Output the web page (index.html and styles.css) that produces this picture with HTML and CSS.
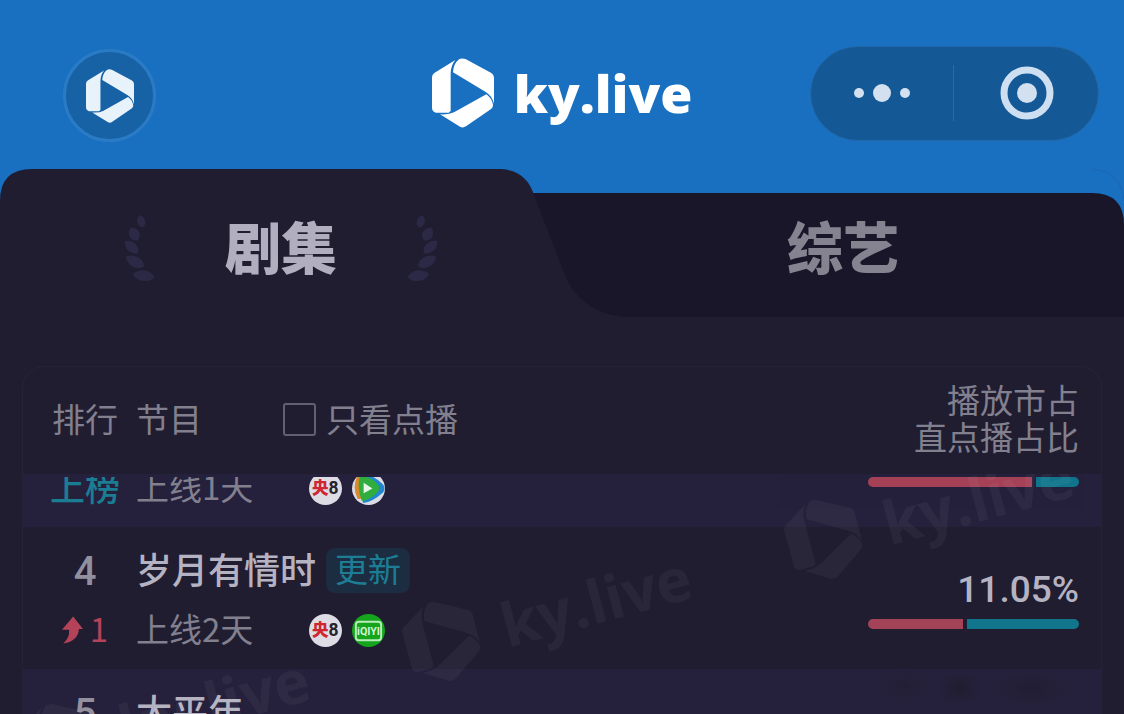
FILE: index.html
```html
<!DOCTYPE html>
<html lang="zh-CN">
<head>
<meta charset="utf-8">
<meta name="viewport" content="width=device-width, initial-scale=1">
<title>ky.live</title>
<link rel="stylesheet" href="styles.css">
</head>
<body>
<svg class="defs" aria-hidden="true">
  <symbol id="logo" viewBox="0 0 186 208">
    <path d="M0 56Q0 48 8 43L70 5Q56 22 56 46V158L50 163H12Q0 160 0 148Z"/>
    <path d="M63 42Q64 16 82 2Q92-2 102 3L178 44Q186 49 186 58V136Q180 112 160 100Z"/>
    <path d="M163 108Q180 120 183 140Q184 148 174 154L102 204Q93 210 84 205L24 168Q50 170 66 162Z"/>
  </symbol>
  <symbol id="laurel" viewBox="0 0 92 198">
    <g transform="translate(51 19) rotate(-15) scale(1 .65)"><path d="M0-30Q12-16 12 2Q12 20 0 30Q-12 20-12 2Q-12-16 0-30Z"/></g>
    <g transform="translate(30 57) rotate(-30) scale(1.3 .75)"><path d="M0-30Q12-16 12 2Q12 20 0 30Q-12 20-12 2Q-12-16 0-30Z"/></g>
    <g transform="translate(22 96) rotate(-48) scale(1.25 .9)"><path d="M0-30Q12-16 12 2Q12 20 0 30Q-12 20-12 2Q-12-16 0-30Z"/></g>
    <g transform="translate(32 140) rotate(-62) scale(1.35 1.05)"><path d="M0-30Q12-16 12 2Q12 20 0 30Q-12 20-12 2Q-12-16 0-30Z"/></g>
    <g transform="translate(58 182) rotate(-82) scale(1.35 1.1)"><path d="M0-30Q12-16 12 2Q12 20 0 30Q-12 20-12 2Q-12-16 0-30Z"/></g>
  </symbol>
</svg>

<header class="topbar">
  <button class="home" type="button" aria-label="首页"><svg><use href="#logo"/></svg></button>
  <div class="brand"><svg class="brand-mark"><use href="#logo"/></svg><span>ky.live</span></div>
  <div class="capsule">
    <button type="button" aria-label="更多">
      <svg width="58" height="20" viewBox="0 0 58 20"><circle cx="6" cy="10" r="5"/><circle cx="29" cy="10" r="9"/><circle cx="52" cy="10" r="5"/></svg>
    </button>
    <button type="button" aria-label="关闭">
      <svg width="54" height="54" viewBox="0 0 54 54"><circle class="ring" cx="27" cy="27" r="23"/><circle cx="27" cy="27" r="10"/></svg>
    </button>
  </div>
</header>

<main>
  <nav class="tabs">
    <svg class="tabs-shape" viewBox="0 0 1124 148" preserveAspectRatio="none" aria-hidden="true">
      <path class="shape-edge" d="M1092 0Q1120 2 1124 30"/>
      <path class="shape-back" d="M520 24H1092Q1124 24 1124 56V148H520Z"/>
      <path class="shape-front" d="M0 32Q0 0 32 0H498C518 0 529 10 534 26L564 104C574 130 596 146 626 148H0Z"/>
    </svg>
    <button class="tab tab-active" type="button">
      <svg class="laurel"><use href="#laurel"/></svg>
      <span>剧集</span>
      <svg class="laurel laurel-right"><use href="#laurel"/></svg>
    </button>
    <button class="tab" type="button"><span>综艺</span></button>
  </nav>

  <section class="card">
    <table>
      <thead>
        <tr>
          <th class="col-rank">排行</th>
          <th class="col-show">
            <div class="show-head">
              <span>节目</span>
              <div class="filter"><input type="checkbox" id="vod-only"><label for="vod-only">只看点播</label></div>
            </div>
          </th>
          <th class="col-share">播放市占<br>直点播占比</th>
        </tr>
      </thead>
      <tbody>
        <tr class="scrolled">
          <td class="col-rank"><div class="cell"><div class="line sub new"><span>上榜</span></div></div></td>
          <td class="col-show">
            <div class="cell">
              <div class="line sub"><span>上线1天</span>
                <div class="platforms">
                  <svg class="pf" viewBox="0 0 34 34" role="img" aria-label="央8"><circle class="pf-base" cx="17" cy="17" r="17"/><text class="pf-cctv" x="3" y="23">央</text><text class="pf-num" x="20" y="23">8</text></svg>
                  <svg class="pf" viewBox="0 0 34 34" role="img" aria-label="腾讯视频"><circle class="pf-base" cx="17" cy="17" r="17"/><path fill="#d9882b" d="M5 5Q0 17 6 28L11 27V5Z"/><path fill="#1f86cf" d="M8 2Q22 2 32 13Q35 17 32 21Q21 31 11 32L13 8Z"/><path fill="#2fae3f" d="M8 4Q19 4 27 13Q29 17 27 20Q19 29 10 30Q5 17 8 4Z"/><path fill="#e9f5ea" d="M12 11L21 17L12 22Z"/></svg>
                </div>
              </div>
            </div>
          </td>
          <td class="col-share"><div class="cell"><div class="bar"><i class="live" style="flex-grow:164"></i><i class="vod" style="flex-grow:43"></i></div></div></td>
        </tr>
        <tr>
          <td class="col-rank"><div class="cell"><div class="line title num">4</div><div class="line sub up"><svg width="21" height="28" viewBox="0 0 62 80"><path d="M33 0L62 37H50Q48 72 4 80Q23 62 21 39H0Z"/></svg><span>1</span></div></div></td>
          <td class="col-show">
            <div class="cell">
              <div class="line title"><span>岁月有情时</span><span class="tag">更新</span></div>
              <div class="line sub"><span>上线2天</span>
                <div class="platforms">
                  <svg class="pf" viewBox="0 0 34 34" role="img" aria-label="央8"><circle class="pf-base" cx="17" cy="17" r="17"/><text class="pf-cctv" x="3" y="23">央</text><text class="pf-num" x="20" y="23">8</text></svg>
                  <svg class="pf" viewBox="0 0 34 34" role="img" aria-label="爱奇艺"><circle fill="#14a51c" cx="17" cy="17" r="17"/><rect class="pf-frame" x="4" y="8" width="26" height="19" rx="3"/><text class="pf-iqiyi" x="17" y="22">iQIYI</text></svg>
                </div>
              </div>
            </div>
          </td>
          <td class="col-share"><div class="cell"><div class="percent">11.05%</div><div class="bar"><i class="live" style="flex-grow:95"></i><i class="vod" style="flex-grow:112"></i></div></div></td>
        </tr>
        <tr>
          <td class="col-rank"><div class="cell"><div class="line title num">5</div></div></td>
          <td class="col-show"><div class="cell"><div class="line title"><span>太平年</span></div></div></td>
          <td class="col-share"><div class="cell smudge"></div></td>
        </tr>
      </tbody>
    </table>
    <div class="watermarks" aria-hidden="true">
      <div class="wm wm-a"><svg><use href="#logo"/></svg><span>ky.live</span></div>
      <div class="wm wm-b"><svg><use href="#logo"/></svg><span>ky.live</span></div>
      <div class="wm wm-c"><svg><use href="#logo"/></svg><span>ky.live</span></div>
    </div>
  </section>
</main>
</body>
</html>
```
FILE: styles.css
```css
* { box-sizing: border-box; }

html { background: #201d31; }

body {
  display: flex;
  flex-direction: column;
  margin: 0;
  height: 100vh;
  overflow: hidden;
  background: #201d31;
  color: #82808f;
  font-family: "Noto Sans CJK SC", sans-serif;
  font-size: 33px;
}

button {
  border: 0;
  padding: 0;
  background: none;
  color: inherit;
  font: inherit;
}

.defs { position: absolute; width: 0; height: 0; }

/* Top bar */
.topbar {
  display: grid;
  flex: none;
  grid-template-columns: 1fr auto 1fr;
  align-items: center;
  padding: 44px 25px 27px;
  background: #1a70c0;
}

.home {
  display: grid;
  place-items: center;
  width: 93px;
  height: 93px;
  margin: 5px 0 0 38px;
  border: 3px solid #2a7bc5;
  border-radius: 50%;
  background: #1761a5;
}

.home svg { width: 48px; height: 54px; fill: #e8f2fb; }

.brand {
  display: flex;
  align-items: center;
  gap: 20px;
  color: #fff;
  font: 800 52px/70px "Open Sans", sans-serif;
}

.brand-mark { width: 62px; height: 70px; fill: #fff; }

.capsule {
  justify-self: end;
  display: flex;
  align-items: center;
  width: 289px;
  height: 95px;
  border: 1px solid #2269ab;
  border-radius: 48px;
  background: #145996;
}

.capsule button {
  flex: 1;
  display: grid;
  place-items: center;
  height: 56px;
}

.capsule button + button { padding-left: 3px; border-left: 1px solid #2a6ba6; }
.capsule svg { fill: #d2e0f0; }
.capsule .ring { fill: none; stroke: #cfdff2; stroke-width: 7; }

/* Tabs */
main {
  display: flex;
  flex: 1;
  flex-direction: column;
  min-height: 0;
  overflow: hidden;
}

.tabs {
  position: relative;
  display: grid;
  flex: none;
  grid-template-columns: 1fr 1fr;
  height: 148px;
}

.tabs::before {
  content: "";
  position: absolute;
  inset: 0 0 auto;
  height: 80px;
  background: #1a70c0;
}

.tabs-shape {
  position: absolute;
  width: 100%;
  height: 100%;
}

.shape-back { fill: #19162a; }
.shape-front { fill: #201d31; }
.shape-edge { fill: none; stroke: #1a66ae; }

.tab {
  position: relative;
  display: flex;
  align-items: center;
  justify-content: center;
  gap: 70px;
  padding-top: 10px;
  color: #85838f;
  font-size: 56px;
  font-weight: 900;
  line-height: 80px;
}

.tab span { padding-bottom: 7px; }
.tab-active { color: #b0aebf; }
.laurel { width: 31px; height: 66px; fill: #2c2947; }
.laurel-right { transform: scaleX(-1); }

/* Ranking card */
.card {
  position: relative;
  flex: 1;
  min-height: 0;
  margin: 49px 22px 0;
  border: 1px solid #262338;
  border-bottom: 0;
  border-radius: 22px 22px 0 0;
  overflow: hidden;
}

table {
  width: 100%;
  table-layout: fixed;
  border-collapse: collapse;
}

th {
  height: 107px;
  padding: 0 0 5px;
  font-weight: 400;
  line-height: 37px;
  text-align: left;
}

td { padding: 0; vertical-align: top; }

tbody tr:nth-child(odd) { background: #25213c; }

.col-rank { width: 113px; padding-left: 11px; text-align: center; }
.col-share { width: 240px; padding-right: 22px; text-align: right; }

.show-head { display: flex; align-items: center; gap: 81px; }
.filter { display: flex; align-items: center; gap: 10px; }

.filter input {
  appearance: none;
  width: 33px;
  height: 33px;
  margin: 2px 0 0;
  border: 2px solid #625f70;
  border-radius: 3px;
}

.cell {
  display: flex;
  flex-direction: column;
  height: 142px;
  padding: 21px 0 17px;
}

.scrolled td { padding-top: 3px; }

.scrolled .cell {
  height: 50px;
  padding-top: 0;
  overflow: hidden;
  justify-content: flex-end;
}

.line { display: flex; flex: none; }
.col-rank .line { justify-content: center; }

.title {
  height: 45px;
  gap: 10px;
  color: #b5b3c2;
  font-size: 36px;
  font-weight: 500;
  line-height: 40px;
}

.num {
  color: #92909e;
  font-family: Roboto, sans-serif;
  font-size: 40px;
  line-height: 48px;
}

.sub { align-items: center; height: 44px; line-height: 40px; }
.sub span { padding-bottom: 4px; }
.title + .sub { margin-top: 15px; }

.new { color: #1b7d93; font-size: 35px; font-weight: 500; }
.up { gap: 7px; color: #b4435a; }
.up svg { fill: #b4435a; }

.tag {
  padding: 0 9px;
  border-radius: 9px;
  background: #1c2d42;
  color: #1c7d95;
  font-size: 33px;
  font-weight: 400;
}

.platforms { display: flex; gap: 10px; margin-left: 56px; }
.pf { width: 33px; height: 33px; }
.pf-base { fill: #dddce4; }
.pf-cctv { fill: #cf2631; font: 900 17px "Noto Sans CJK SC", sans-serif; }
.pf-num { fill: #25232d; font: 700 18px Roboto, sans-serif; }
.pf-frame { fill: none; stroke: #b9ecbc; stroke-width: 2; }
.pf-iqiyi { fill: #d3f4d5; font: 700 11px Roboto, sans-serif; text-anchor: middle; }

.col-share .cell { padding-bottom: 40px; align-items: flex-end; justify-content: flex-end; }

.percent {
  margin-bottom: 5px;
  color: #b5b3c2;
  font: 500 37px/48px Roboto, sans-serif;
}

.bar {
  display: flex;
  flex: none;
  gap: 4px;
  width: 211px;
  height: 10px;
  border-radius: 5px;
  overflow: hidden;
}

.live { background: #a44258; }
.vod { background: #11758c; }

.smudge {
  background:
    radial-gradient(ellipse 30px 18px at 20% 12%, #221f35, transparent),
    radial-gradient(ellipse 24px 18px at 45% 14%, #201d30, transparent),
    radial-gradient(ellipse 44px 18px at 78% 14%, #211e33, transparent);
}

/* Watermarks */
.watermarks {
  position: absolute;
  inset: 107px 0 0;
  overflow: hidden;
  pointer-events: none;
}

.wm {
  position: absolute;
  display: flex;
  align-items: center;
  gap: 25px;
  color: #fff;
  font: 700 60px/82px "Open Sans", sans-serif;
  opacity: .04;
  transform: rotate(-15deg);
}

.wm svg { width: 73px; height: 82px; fill: #fff; }
.wm-a { left: 379px; top: 98px; }
.wm-b { left: 761px; top: -4px; }
.wm-c { left: -3px; top: 200px; }
```
